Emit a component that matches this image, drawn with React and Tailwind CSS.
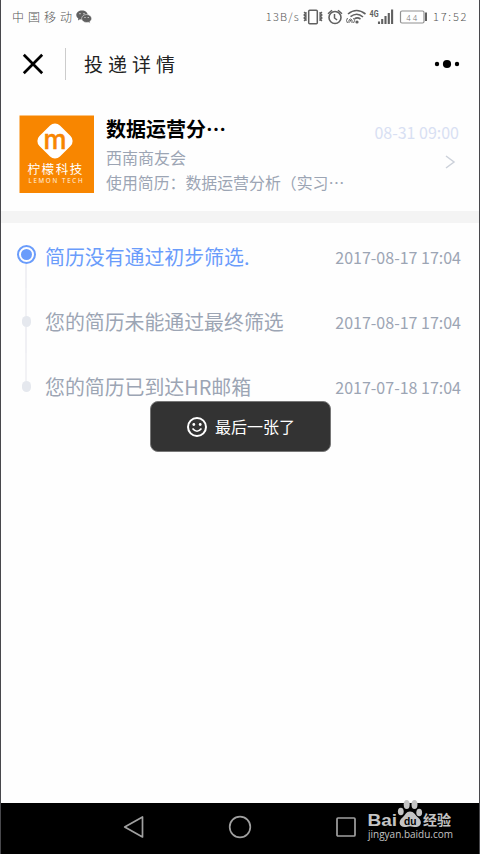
const steps = [
  { text: '简历没有通过初步筛选.', date: '2017-08-17 17:04', active: true },
  { text: '您的简历未能通过最终筛选', date: '2017-08-17 17:04' },
  { text: '您的简历已到达HR邮箱', date: '2017-07-18 17:04' },
];

const StatusIcons = () => (
  <svg width="126" height="18" viewBox="303 7 126 18" className="shrink-0" fill="none" stroke="#606060">
    {/* vibrate */}
    <rect x="308.7" y="9.2" width="8.6" height="13.5" rx="1" strokeWidth="1.5" />
    <path d="M304 11l1.5 1.5-1.5 1.5 1.5 1.5-1.5 1.5 1.5 1.5-1.5 1.5M306 11v9M322 11l-1.5 1.5 1.5 1.5-1.5 1.5 1.5 1.5-1.5 1.5 1.5 1.5M320 11v9" strokeWidth="1.2" />
    {/* alarm */}
    <circle cx="335" cy="16.5" r="6" strokeWidth="1.6" />
    <path d="M334.5 13v4l2.6 2M328 12.7l4-3.4M342 12.7l-4-3.4" strokeWidth="1.5" />
    {/* wifi */}
    <path d="M348 13q8.500-7 17.500 0M350.500 15.700q6.500-5 12.500.3M354.500 17.800q3-2 6 .3" strokeWidth="1.6" />
    <circle cx="357" cy="21" r="1.6" fill="#606060" stroke="none" />
    <path d="M347.5 17q-2 2.500 0 5M353.500 17q2.200 2.500 0 5M349 22v-3q1.500-2 3 0v3M350.500 19v1.500" strokeWidth="1" />
    {/* signal */}
    <text x="369.6" y="15.6" fontSize="9" fontWeight="700" fontFamily="Roboto, sans-serif" fill="#606060" stroke="none" textLength="9" lengthAdjust="spacingAndGlyphs">4G</text>
    <path d="M379 20.5v2.5M382.2 18v5M385.5 15v8M388.8 12v11M392.1 8.5v14.5" strokeWidth="2.1" />
    {/* battery */}
    <rect x="400.5" y="10" width="23.5" height="12" rx="1.5" stroke="#909090" strokeWidth="1.2" />
    <rect x="425" y="11.5" width="2" height="8.5" fill="#606060" stroke="none" />
    <text x="406.3" y="19.5" fontSize="8.5" fontFamily="'Noto Sans CJK SC', sans-serif" fill="#777" stroke="none" letterSpacing="1.8">44</text>
  </svg>
);

const WechatIcon = () => (
  <svg width="16" height="14" viewBox="0 0 16 14">
    <path d="M6 .5C2.8.5.3 2.5.3 5c0 1.5.8 2.7 2 3.5L2 10.5l2-1.2c.6.2 1.3.2 2 .2 3.200 0 5.700-2 5.700-4.500S9.200.5 6 .5z" fill="#606060" />
    <path d="M10.600 4.500c-2.800 0-5 1.800-5 4s2.200 4 5 4c.6 0 1.200-.1 1.700-.2l1.900 1-.4-1.700c1.100-.7 1.800-1.800 1.800-3.100 0-2.200-2.200-4-5-4z" fill="#606060" stroke="#fefefe" strokeWidth=".5" />
    <g fill="#fefefe">
      <circle cx="4" cy="3.7" r=".6" />
      <circle cx="8" cy="3.7" r=".6" />
      <circle cx="9" cy="7.5" r=".6" />
      <circle cx="12.2" cy="7.5" r=".6" />
    </g>
  </svg>
);

const StatusBar = () => (
  <div className="flex items-center h-[33px] pl-[11px] pr-[10px] text-xs font-light text-[#555]">
    <span className="w-[64px] tracking-[4px] whitespace-nowrap">中国移动</span>
    <WechatIcon />
    <span className="ml-auto mr-[3px] text-[11px] tracking-[1.2px]">13B/s</span>
    <StatusIcons />
    <span className="ml-[4px] w-[36px] text-[11px] tracking-[1.8px] whitespace-nowrap">17:52</span>
  </div>
);

const Header = () => (
  <header className="flex items-center h-[63px] pb-[2px] pl-[21px] pr-[19px]">
    <svg width="22" height="22" viewBox="0 0 22 22">
      <path d="M1.8 1.8l18.4 18.4M20.2 1.8L1.8 20.2" stroke="#000" strokeWidth="2.7" />
    </svg>
    <div className="ml-[21px] w-px h-8 bg-[#ccc]" />
    <h1 className="ml-[18px] pt-[2px] text-[19px] tracking-[5px] font-normal text-[#222]">投递详情</h1>
    <svg width="26" height="10" viewBox="0 0 26 10" className="ml-auto">
      <circle cx="3" cy="5" r="2.2" />
      <circle cx="13" cy="5" r="4.1" />
      <circle cx="23" cy="5" r="2.2" />
    </svg>
  </header>
);

const CompanyLogo = () => (
  <svg width="75" height="78" viewBox="0 0 75 78" className="shrink-0">
    <rect x=".5" y=".5" width="74.5" height="77.5" fill="#f88600" />
    <rect x="21.5" y="11.5" width="29" height="29" rx="7" fill="#fff" transform="rotate(45 36 26)" />
    <text x="36" y="33.5" textAnchor="middle" fontSize="27" fontWeight="500" fontFamily="Inter, sans-serif" fill="#f88600" stroke="#f88600" strokeWidth=".5" textLength="23" lengthAdjust="spacingAndGlyphs">m</text>
    <text x="8.5" y="58.5" fontSize="12.5" fontFamily="'Noto Sans CJK SC', sans-serif" fill="#fff" letterSpacing="1.6">柠檬科技</text>
    <text x="9.5" y="68" fontSize="6.2" fontFamily="'Noto Sans', sans-serif" fill="#fff3e0" textLength="54">LEMON TECH</text>
  </svg>
);

const JobCard = () => (
  <section className="flex h-[115px] pt-[19px] pl-[18px] pr-5">
    <CompanyLogo />
    <div className="ml-3 flex flex-col whitespace-nowrap text-[#9ca5b4]">
      <h2 className="text-[20px] leading-[28px] font-bold text-black">数据运营分…</h2>
      <p className="text-base leading-[28px]">西南商友会</p>
      <p className="text-[15.9px] leading-[23px]">使用简历：数据运营分析（实习…</p>
    </div>
    <div className="flex flex-col items-end w-[85px] -ml-10 grow whitespace-nowrap">
      <span className="pt-[5px] text-base leading-6 text-[#d8e0f3]">08-31 09:00</span>
      <svg width="12" height="14" viewBox="0 0 12 14" className="mt-[11px] mr-[3px]" fill="none" stroke="#ccd1da" strokeWidth="1.5">
        <path d="M2 1l8 6-8 6" />
      </svg>
    </div>
  </section>
);

const Marker = ({ active }) =>
  active ? (
    <div className="flex items-center justify-center shrink-0 size-[19px] rounded-full border-2 border-[#6a9cfb]">
      <div className="size-[11px] rounded-full bg-[#6a9cfb]" />
    </div>
  ) : (
    <div className="shrink-0 w-[9px] h-[11px] rounded-full bg-[#e5e8ee]" />
  );

const Timeline = () => (
  <ul className="pl-[15px] pr-[18px]">
    {steps.map((step, i) => (
      <li key={i} className="flex h-[65px]">
        <div className="flex flex-col items-center w-5">
          <div className={step.active ? 'h-[22px] shrink-0' : 'h-[28px] w-[2px] shrink-0 bg-[#f2f2f5]'} />
          <Marker active={step.active} />
          {i < steps.length - 1 && <div className="w-[2px] grow bg-[#f0f0f4]" />}
        </div>
        <div className={`flex grow items-center justify-between h-[68px] pl-[9px] whitespace-nowrap ${step.active ? 'text-[#6a9cfb]' : 'text-[#9ca5b4]'}`}>
          <span className="text-[19.9px] leading-7">{step.text}</span>
          <span className="text-base text-[#9ca5b4]">{step.date}</span>
        </div>
      </li>
    ))}
  </ul>
);

const Toast = () => (
  <div className="absolute left-[149px] top-[401px] flex items-center justify-center gap-2 w-[181px] h-[51px] pl-px rounded-lg border border-[#777] bg-[#333] text-white">
    <svg width="20" height="20" viewBox="0 0 20 20" fill="none" stroke="#fff" strokeWidth="2">
      <circle cx="10" cy="10" r="9" />
      <path d="M5.5 11.5q4.500 5.500 9 0" strokeWidth="1.6" />
      <circle cx="6.8" cy="7.5" r="1.4" fill="#fff" stroke="none" />
      <circle cx="13.2" cy="7.5" r="1.4" fill="#fff" stroke="none" />
    </svg>
    <span className="pb-[2px] text-base font-normal">最后一张了</span>
  </div>
);

const Watermark = () => (
  <svg width="92" height="46" viewBox="364 797 92 46" className="absolute left-[363px] top-[797px]" fill="#c4c4c4">
    <text x="367.5" y="825.5" fontSize="16.5" fontWeight="700" fontFamily="'Liberation Sans', sans-serif" textLength="29.5" lengthAdjust="spacingAndGlyphs">Bai</text>
    <ellipse cx="400.8" cy="811.5" rx="2.9" ry="3.8" />
    <ellipse cx="406.7" cy="804.5" rx="3" ry="4.5" />
    <ellipse cx="414.5" cy="804.5" rx="3" ry="4.5" />
    <ellipse cx="419.2" cy="812.5" rx="2.9" ry="3.8" />
    <path d="M410 811.500c-4 0-4.500 3.500-7.500 6-5 4-3 9.500 2 9.500 2.500 0 3.500-.8 5.500-.8s3.500.8 6 .8c5 0 7-5.500 2-9.500-3-2.500-4-6-8-6z" />
    <text x="404" y="824.5" fontSize="11.5" fontWeight="700" fontFamily="'Liberation Sans', sans-serif" fill="#000" textLength="12.5" lengthAdjust="spacingAndGlyphs">du</text>
    <text x="423" y="825" fontSize="14" fontWeight="700" fontFamily="'Noto Sans CJK SC', sans-serif">经验</text>
    <text x="368" y="838" fontSize="10" fontFamily="'Open Sans', sans-serif" textLength="85" lengthAdjust="spacingAndGlyphs">jingyan.baidu.com</text>
  </svg>
);

const NavBar = () => (
  <nav className="flex justify-center items-center gap-[84px] h-[51px] pb-[3px] bg-black">
    <svg width="22" height="24" viewBox="0 0 22 24" fill="none" stroke="#a0a0a0" strokeWidth="1.7" strokeLinejoin="round">
      <path d="M2.7 12L20.500 2v20z" />
    </svg>
    <svg width="24" height="24" viewBox="0 0 24 24" fill="none" stroke="#a0a0a0" strokeWidth="1.7">
      <circle cx="12" cy="12" r="10.3" />
    </svg>
    <svg width="22" height="24" viewBox="0 0 22 24" fill="none" stroke="#a0a0a0" strokeWidth="1.7">
      <rect x="1" y="3" width="18" height="18" rx="1" />
    </svg>
  </nav>
);

export default function App() {
  return (
    <div className="relative flex flex-col w-[480px] h-[854px] overflow-hidden border-x border-[#48484c] bg-[#fefefe] font-['Noto_Sans_CJK_SC',sans-serif]">
      <StatusBar />
      <Header />
      <JobCard />
      <div className="h-3 shrink-0 bg-[#f4f4f4]" />
      <main className="grow">
        <Timeline />
      </main>
      <NavBar />
      <Toast />
      <Watermark />
    </div>
  );
}
